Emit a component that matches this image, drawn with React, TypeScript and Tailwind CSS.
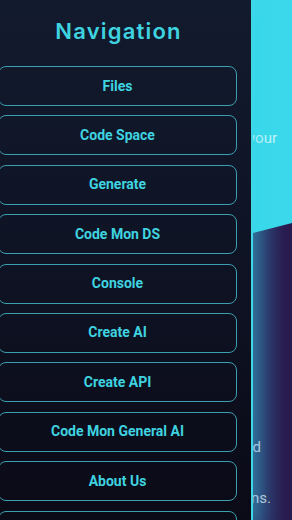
import React from "react";

const items = [
  "Files",
  "Code Space",
  "Generate",
  "Code Mon DS",
  "Console",
  "Create AI",
  "Create API",
  "Code Mon General AI",
  "About Us",
  "Contact",
];

export default function App() {
  return (
    <div className="relative w-[292px] h-[520px] overflow-hidden bg-[#2a1b4e]" style={{ fontFamily: "Roboto, 'Liberation Sans', sans-serif" }}>
      {/* page behind */}
      <div className="flex flex-col w-full h-full">
        <div className="relative h-[233px] bg-[#3ad8ea] flex flex-col">
          <p className="pt-[127px] pr-[15px] text-right text-[15px] text-[#c4f3f8] whitespace-nowrap">Build and manage your</p>
          <div className="absolute left-0 right-0 bottom-0 h-[10px] bg-[linear-gradient(90deg,#2a8ea8_0px,#2c3f72_262px,#2a1b4e_285px)] [clip-path:polygon(86.6%_100%,100%_0,100%_100%)]" />
        </div>
        <div className="flex-1 flex flex-col bg-[linear-gradient(90deg,#2a8ea8_0px,#2c3f72_262px,#2a1b4e_285px)]">
          <p className="pt-[203px] pr-[31px] text-right text-[15px] text-[#c2c4da] whitespace-nowrap">Modern tools and</p>
          <p className="pt-[28px] pr-[21px] text-right text-[15px] text-[#c2c4da] whitespace-nowrap">smart solutions.</p>
        </div>
      </div>

      {/* drawer */}
      <div className="absolute left-0 top-0 bottom-0 w-[253px] border-r-2 border-[#3fd6e6] bg-[linear-gradient(180deg,#121a2d_0%,#0f1526_40%,#0b0a17_100%)] shadow-[0_0_18px_4px_rgba(58,216,234,0.45)] flex flex-col">
        <h1
          className="text-center text-[22px] font-semibold tracking-[1.2px] text-[#3fd3e0] pt-[17px] pr-[14px] leading-[28px]"
          style={{ fontFamily: "Inter, 'Noto Sans', sans-serif" }}
        >
          Navigation
        </h1>
        <nav className="flex flex-col gap-[9.4px] mt-[21px] ml-[-2px] w-[239px]">
          {items.map((t) => (
            <button
              key={t}
              className="h-[40px] shrink-0 rounded-[8px] border-[1.5px] border-[#3a9fae] bg-transparent text-[14px] font-bold text-[#3fd3e0] flex items-center justify-center"
            >
              {t}
            </button>
          ))}
        </nav>
      </div>
    </div>
  );
}
